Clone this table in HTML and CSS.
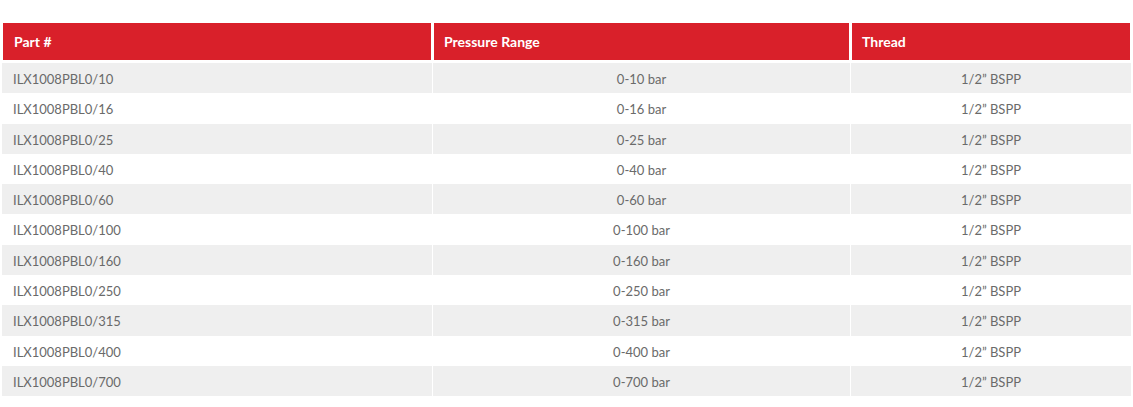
FILE: index.html
```html
<!DOCTYPE html>
<html lang="en">
<head>
<meta charset="utf-8">
<title>Pressure Range Table</title>
<link rel="stylesheet" href="styles.css">
</head>
<body>
<div class="wrap">
<table class="spec">
<colgroup><col class="c1"><col class="c2"><col class="c3"></colgroup>
<thead>
<tr><th>Part #</th><th>Pressure Range</th><th>Thread</th></tr>
</thead>
<tbody>
<tr><td>ILX1008PBL0/10</td><td class="mid">0-10 bar</td><td class="mid">1/2” BSPP</td></tr>
<tr><td>ILX1008PBL0/16</td><td class="mid">0-16 bar</td><td class="mid">1/2” BSPP</td></tr>
<tr><td>ILX1008PBL0/25</td><td class="mid">0-25 bar</td><td class="mid">1/2” BSPP</td></tr>
<tr><td>ILX1008PBL0/40</td><td class="mid">0-40 bar</td><td class="mid">1/2” BSPP</td></tr>
<tr><td>ILX1008PBL0/60</td><td class="mid">0-60 bar</td><td class="mid">1/2” BSPP</td></tr>
<tr><td>ILX1008PBL0/100</td><td class="mid">0-100 bar</td><td class="mid">1/2” BSPP</td></tr>
<tr><td>ILX1008PBL0/160</td><td class="mid">0-160 bar</td><td class="mid">1/2” BSPP</td></tr>
<tr><td>ILX1008PBL0/250</td><td class="mid">0-250 bar</td><td class="mid">1/2” BSPP</td></tr>
<tr><td>ILX1008PBL0/315</td><td class="mid">0-315 bar</td><td class="mid">1/2” BSPP</td></tr>
<tr><td>ILX1008PBL0/400</td><td class="mid">0-400 bar</td><td class="mid">1/2” BSPP</td></tr>
<tr><td>ILX1008PBL0/700</td><td class="mid">0-700 bar</td><td class="mid">1/2” BSPP</td></tr>
</tbody>
</table>
</div>
</body>
</html>
```
FILE: styles.css
```css
html, body {
  margin: 0;
  padding: 0;
  background: #ffffff;
}
.wrap {
  padding: 22px 0 0 1px;
}
.spec {
  width: 1131px;
  table-layout: fixed;
  border-collapse: separate;
  border-spacing: 1px 0;
  font-family: Lato, "Open Sans", sans-serif;
  font-size: 13px;
  color: #6a6a6a;
}
.c1 { width: 430px; }
.c2 { width: 417px; }
.c3 { width: 280px; }
.spec th {
  background: #d9202a;
  color: #ffffff;
  font-size: 14px;
  font-weight: 700;
  text-align: left;
  height: 37px;
  line-height: 37px;
  padding: 0 10px;
  border-style: solid;
  border-color: #ffffff;
  border-width: 1px 1px 3px 1px;
  box-sizing: content-box;
}
.spec th:first-child {
  padding-left: 11px;
}
.spec td {
  height: 30.3px;
  line-height: 27.3px;
  padding: 3px 11px 0 11px;
  box-sizing: border-box;
  white-space: nowrap;
}
.spec td.mid {
  text-align: center;
}
.spec tbody tr:nth-child(odd) td {
  background: #efefef;
}
```
